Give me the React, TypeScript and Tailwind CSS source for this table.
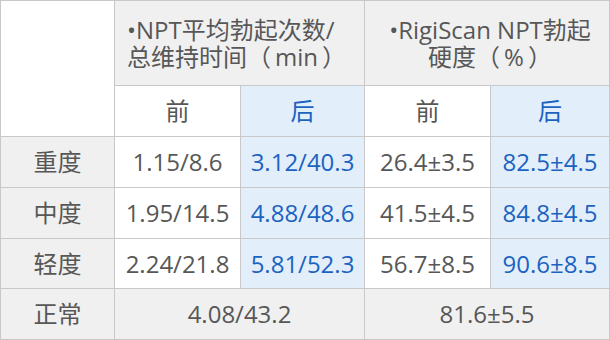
const rows = [
  { label: '重度', a: '1.15/8.6', b: '3.12/40.3', c: '26.4±3.5', d: '82.5±4.5' },
  { label: '中度', a: '1.95/14.5', b: '4.88/48.6', c: '41.5±4.5', d: '84.8±4.5' },
  { label: '轻度', a: '2.24/21.8', b: '5.81/52.3', c: '56.7±8.5', d: '90.6±8.5' },
];

const cell = 'flex items-center justify-center';
const gray = 'bg-[#f0f0f0] text-[#575757]';
const plain = 'bg-white text-[#575757]';
const blue = 'bg-[#e3eefb] text-[#1b63c1]';
const cjk = { fontFamily: '"Noto Sans CJK SC", sans-serif' };

export default function App() {
  return (
    <div
      className="grid w-[610px] h-[340px] grid-cols-[113px_125px_123px_125px_118px] grid-rows-[84px_50px_50px_50px_49px_50px] gap-px p-px bg-[#c8c8c8] text-[24px] leading-[26px]"
      style={{ fontFamily: '"Open Sans", "Noto Sans CJK SC", sans-serif' }}
    >
      <div className="row-span-2 bg-white" />
      <div className={`col-span-2 ${cell} ${gray} pr-[6px]`}>
        <div className="text-left">
          <div>•NPT平均勃起次数/</div>
          <div>
            总维持时间<span style={cjk}>（</span>
            <span className="mx-[4px]">min</span>
            <span style={cjk}>）</span>
          </div>
        </div>
      </div>
      <div className={`col-span-2 ${cell} ${gray} text-center pl-[6px]`}>
        <div>
          <div>•RigiScan NPT勃起</div>
          <div>
            硬度<span style={cjk}>（</span>
            <span className="mx-[4px]">%</span>
            <span style={cjk}>）</span>
          </div>
        </div>
      </div>
      <div className={`${cell} ${plain}`}>前</div>
      <div className={`${cell} ${blue}`}>后</div>
      <div className={`${cell} ${plain}`}>前</div>
      <div className={`${cell} ${blue}`}>后</div>

      {rows.map(r => (
        <div key={r.label} className="contents">
          <div className={`${cell} ${gray}`}>{r.label}</div>
          <div className={`${cell} ${plain}`}>{r.a}</div>
          <div className={`${cell} ${blue}`}>{r.b}</div>
          <div className={`${cell} ${plain}`}>{r.c}</div>
          <div className={`${cell} ${blue}`}>{r.d}</div>
        </div>
      ))}

      <div className={`${cell} ${gray}`}>正常</div>
      <div className={`col-span-2 ${cell} ${gray}`}>4.08/43.2</div>
      <div className={`col-span-2 ${cell} ${gray}`}>81.6±5.5</div>
    </div>
  );
}
